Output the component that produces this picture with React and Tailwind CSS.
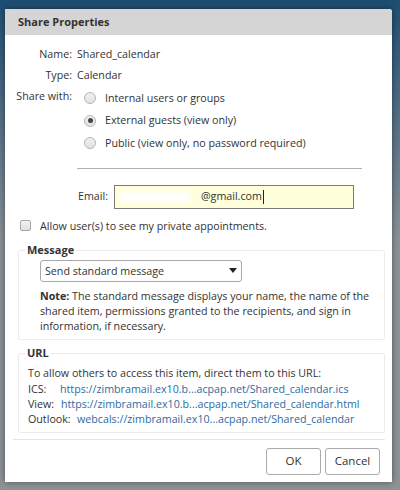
const FONT = { fontFamily: '"Open Sans", "Liberation Sans", sans-serif' }

function Radio({ checked, label }) {
  return (
    <div className="flex items-center h-[22.5px]">
      <span className="w-[12px] h-[12px] rounded-full border border-[#b5b5b5] bg-gradient-to-b from-[#f0f0f0] to-[#e2e2e2] flex items-center justify-center shrink-0">
        {checked && <span className="w-[5px] h-[5px] rounded-full bg-[#444]" />}
      </span>
      <span className="ml-[9px]">{label}</span>
    </div>
  )
}

function Fieldset({ title, children, className }) {
  return (
    <div className={`relative border border-[#ececec] rounded-[2px] ${className}`}>
      <div className="absolute -top-[9px] left-[6px] bg-white px-[2px] font-bold text-[11px] text-[#333] leading-[16px]">{title}</div>
      {children}
    </div>
  )
}

export default function App() {
  return (
    <div className="w-[400px] h-[490px] bg-gradient-to-b from-[#1d4d72] via-[#8c9398] to-[#8f9295] pt-[9px] pl-[5px] overflow-hidden text-[10.7px] text-[#333]" style={FONT}>
      <div className="w-[387px] h-[473px] bg-white rounded-tr-[3px] shadow-[0_0_6px_rgba(0,0,0,0.45)] flex flex-col">
        {/* Header */}
        <div className="h-[26px] bg-[#d5d5d5] flex items-center pl-[13px] text-[11px] font-bold text-[#333] rounded-tr-[3px] shrink-0">
          Share Properties
        </div>

        {/* Props */}
        <div className="pt-[9px] leading-[21px]">
          <div className="flex">
            <span className="w-[67px] text-right">Name:</span>
            <span className="ml-[5px]">Shared_calendar</span>
          </div>
          <div className="flex">
            <span className="w-[67px] text-right">Type:</span>
            <span className="ml-[5px]">Calendar</span>
          </div>
          <div className="flex">
            <span className="w-[67px] text-right">Share with:</span>
            <div className="ml-[12px] pt-[1px]">
              <Radio label="Internal users or groups" />
              <Radio checked label="External guests (view only)" />
              <Radio label="Public (view only, no password required)" />
            </div>
          </div>
        </div>

        <div className="ml-[72px] mr-[30px] mt-[13px] border-t border-[#b0b0b0]" />

        <div className="flex items-center mt-[16px]">
          <span className="w-[103px] text-right">Email:</span>
          <div className="ml-[6px] w-[240px] h-[24px] border border-[#7a7a7a] bg-[#ffffdc] flex items-center pl-[4px]">
            <span className="w-[72px] h-[10px] rounded-full bg-white blur-[2px] mr-[10px]" />
            <span>@gmail.com</span>
            <span className="w-px h-[14px] bg-[#222] ml-[1px]" />
          </div>
        </div>

        <div className="flex items-center mt-[9px] pl-[15px]">
          <span className="w-[11px] h-[11px] border border-[#a8a8a8] rounded-[2px] bg-gradient-to-b from-[#f2f2f2] to-[#e0e0e0]" />
          <span className="ml-[9px]">Allow user(s) to see my private appointments.</span>
        </div>

        <Fieldset title="Message" className="ml-[13px] mr-[7px] mt-[16px] h-[90px] pl-[21px] pt-[9px]">
          <div className="w-[202px] h-[22px] border border-[#a9a9a9] rounded-[3px] flex items-center justify-between px-[4px]">
            <span>Send standard message</span>
            <svg width="8" height="5" viewBox="0 0 8 5"><path d="M0 0h8L4 5z" fill="#222" /></svg>
          </div>
          <div className="mt-[7px] leading-[15px] pr-[12px]">
            <span className="font-bold">Note:</span> The standard message displays your name, the name of the shared item, permissions granted to the recipients, and sign in information, if necessary.
          </div>
        </Fieldset>

        <Fieldset title="URL" className="ml-[13px] mr-[7px] mt-[13px] h-[80px] pl-[9px] pt-[11px]">
          <div className="leading-[16px]">To allow others to access this item, direct them to this URL:</div>
          <div className="mt-[1px] leading-[15px]">
            <div className="flex">
              <span className="w-[32px]">ICS:</span>
              <span className="text-[#2f6aa3]">https://zimbramail.ex10.b...acpap.net/Shared_calendar.ics</span>
            </div>
            <div className="flex">
              <span className="w-[33px]">View:</span>
              <span className="text-[#2f6aa3]">https://zimbramail.ex10.b...acpap.net/Shared_calendar.html</span>
            </div>
            <div className="flex">
              <span className="w-[49px]">Outlook:</span>
              <span className="text-[#2f6aa3]">webcals://zimbramail.ex10...acpap.net/Shared_calendar</span>
            </div>
          </div>
        </Fieldset>

        <div className="ml-[8px] mr-[7px] mt-[6px] border-t border-[#e6e6e6]" />

        <div className="flex justify-end gap-[4px] mr-[12px] mt-[8px]">
          <button className="w-[55px] h-[27px] border border-[#aaa] rounded-[3px] bg-white text-[11.5px] text-[#333]" style={FONT}>OK</button>
          <button className="w-[55px] h-[27px] border border-[#aaa] rounded-[3px] bg-white text-[11.5px] text-[#333]" style={FONT}>Cancel</button>
        </div>
      </div>
    </div>
  )
}
